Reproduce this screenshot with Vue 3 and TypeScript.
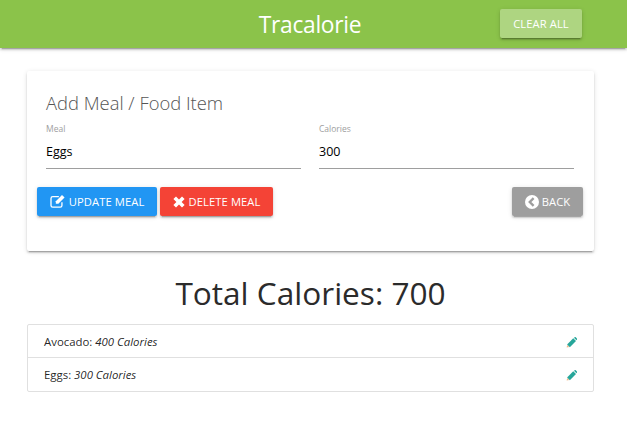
<script setup lang="ts">
interface Meal { name: string; calories: number }
const meals: Meal[] = [
  { name: 'Avocado', calories: 400 },
  { name: 'Eggs', calories: 300 },
]
</script>

<template>
  <div class="page">
    <header class="nav">
      <span class="brand">Tracalorie</span>
      <button class="btn clear">CLEAR ALL</button>
    </header>
    <main class="container">
      <section class="card">
        <h2 class="card-title">Add Meal / Food Item</h2>
        <div class="fields">
          <label class="field">
            <span class="label">Meal</span>
            <input class="input" value="Eggs" />
          </label>
          <label class="field">
            <span class="label">Calories</span>
            <input class="input" value="300" />
          </label>
        </div>
        <div class="actions">
          <button class="btn update">
            <svg class="ico edit" viewBox="0 0 18 16" width="16" height="14">
              <path d="M13.5 9.5V13a2 2 0 0 1-2 2H3a2 2 0 0 1-2-2V5a2 2 0 0 1 2-2h7" fill="none" stroke="currentColor" stroke-width="1.5" />
              <path d="M6.5 8.2 13.6 1.2l2.9 2.9-7.1 7.1H6.5z" fill="currentColor" />
            </svg>
            UPDATE MEAL
          </button>
          <button class="btn delete">
            <svg class="ico cross" viewBox="0 0 12 12" width="12" height="12">
              <path d="M3 .4 6 3.4 9 .4 11.6 3 8.6 6 11.6 9 9 11.6 6 8.6 3 11.6.4 9 3.4 6 .4 3z" fill="currentColor" />
            </svg>
            DELETE MEAL
          </button>
          <button class="btn back">
            <svg class="ico" viewBox="0 0 14 14" width="14" height="14">
              <circle cx="7" cy="7" r="7" fill="currentColor" />
              <path d="M8.6 3.2 4.8 7l3.8 3.8" fill="none" stroke="#9e9e9e" stroke-width="2.4" />
            </svg>
            BACK
          </button>
        </div>
      </section>
      <h1 class="total">Total Calories: 700</h1>
      <ul class="list">
        <li v-for="meal in meals" :key="meal.name" class="row">
          <span class="meal"><span class="name">{{ meal.name }}:</span> <em>{{ meal.calories }} Calories</em></span>
          <svg class="pencil" viewBox="0 0 12 12" width="11" height="11">
            <path d="M3.6 11 .7 11.5l.5-2.9z" fill="#f0b98a" />
            <path d="M1.2 8.1 7.9 1.4l3 3-6.7 6.7z" fill="#26a69a" />
            <path d="M8.6.8 9.6.2a.9.9 0 0 1 1.1.1l1.2 1.2a.9.9 0 0 1 .1 1.1l-.6 1z" fill="#26a69a" />
          </svg>
        </li>
      </ul>
    </main>
  </div>
</template>

<style>
html, body { margin: 0; background: #fff; }
</style>

<style scoped>
.page {
  font-family: "Open Sans", "Noto Sans", sans-serif;
  color: rgba(0, 0, 0, 0.87);
  min-height: 425px;
}
.nav {
  height: 48px;
  background: #8bc34a;
  box-shadow: 0 2px 2px 0 rgba(0,0,0,.14), 0 1px 5px 0 rgba(0,0,0,.12), 0 3px 1px -2px rgba(0,0,0,.2);
  position: relative;
  display: flex;
  justify-content: center;
  align-items: center;
}
.brand {
  color: #fff;
  font-size: 22.8px;
  letter-spacing: -0.3px;
  margin-left: -7px;
}
.btn {
  border: 0;
  border-radius: 2px;
  height: 29px;
  padding: 0;
  color: #fff;
  font-family: inherit;
  font-size: 11.2px;
  letter-spacing: 0.1px;
  display: inline-flex;
  align-items: center;
  justify-content: center;
  gap: 3px;
  box-shadow: 0 2px 2px 0 rgba(0,0,0,.14), 0 1px 5px 0 rgba(0,0,0,.12), 0 3px 1px -2px rgba(0,0,0,.2);
}
.clear {
  position: absolute;
  left: 500px;
  top: 9px;
  width: 82px;
  background: #aed581;
}
.container {
  width: 567px;
  margin: 0 0 0 27px;
  padding-top: 23px;
}
.card {
  height: 180px;
  box-sizing: border-box;
  background: #fff;
  border-radius: 2px;
  padding: 21px 11px 0 10px;
  box-shadow: 0 2px 2px 0 rgba(0,0,0,.14), 0 1px 5px 0 rgba(0,0,0,.12), 0 3px 1px -2px rgba(0,0,0,.2);
}
.card-title {
  margin: -1px 0 0 9px;
  font-size: 18.4px;
  line-height: 24px;
  font-weight: 300;
  color: #555;
}
.fields {
  margin: 8px 9px 0 9px;
  display: grid;
  grid-template-columns: 255px 255px;
  column-gap: 18px;
}
.field { display: flex; flex-direction: column; }
.label {
  font-size: 8.5px;
  line-height: 12px;
  color: #9e9e9e;
}
.input {
  border: 0;
  border-bottom: 1px solid #9e9e9e;
  outline: 0;
  padding: 0 0 1px;
  box-sizing: border-box;
  height: 34px;
  margin-top: 0;
  font-family: inherit;
  font-size: 12.5px;
  color: #000;
  background: transparent;
}
.actions {
  margin-top: 18px;
  display: flex;
  gap: 3px;
}
.update { width: 120px; background: #2196f3; }
.delete { width: 113px; background: #f44336; }
.back { width: 71px; background: #9e9e9e; margin-left: auto; }
.ico { flex: none; }
.edit { margin-top: -2px; }
.cross { margin-right: 1px; }
.total {
  margin: 20px 0 0;
  text-align: center;
  font-size: 31.6px;
  line-height: 44px;
  font-weight: 400;
  color: #2b2b2b;
}
.list {
  list-style: none;
  margin: 9px 0 0;
  padding: 0;
  border: 1px solid #e0e0e0;
  border-radius: 2px;
}
.row {
  height: 32px;
  display: flex;
  align-items: center;
  justify-content: space-between;
  padding: 0 16px;
  font-size: 11.4px;
}
.row + .row { height: 33px; border-top: 1px solid #e0e0e0; }
.name { font-weight: 500; }
.pencil { flex: none; margin-top: 2px; }
</style>
